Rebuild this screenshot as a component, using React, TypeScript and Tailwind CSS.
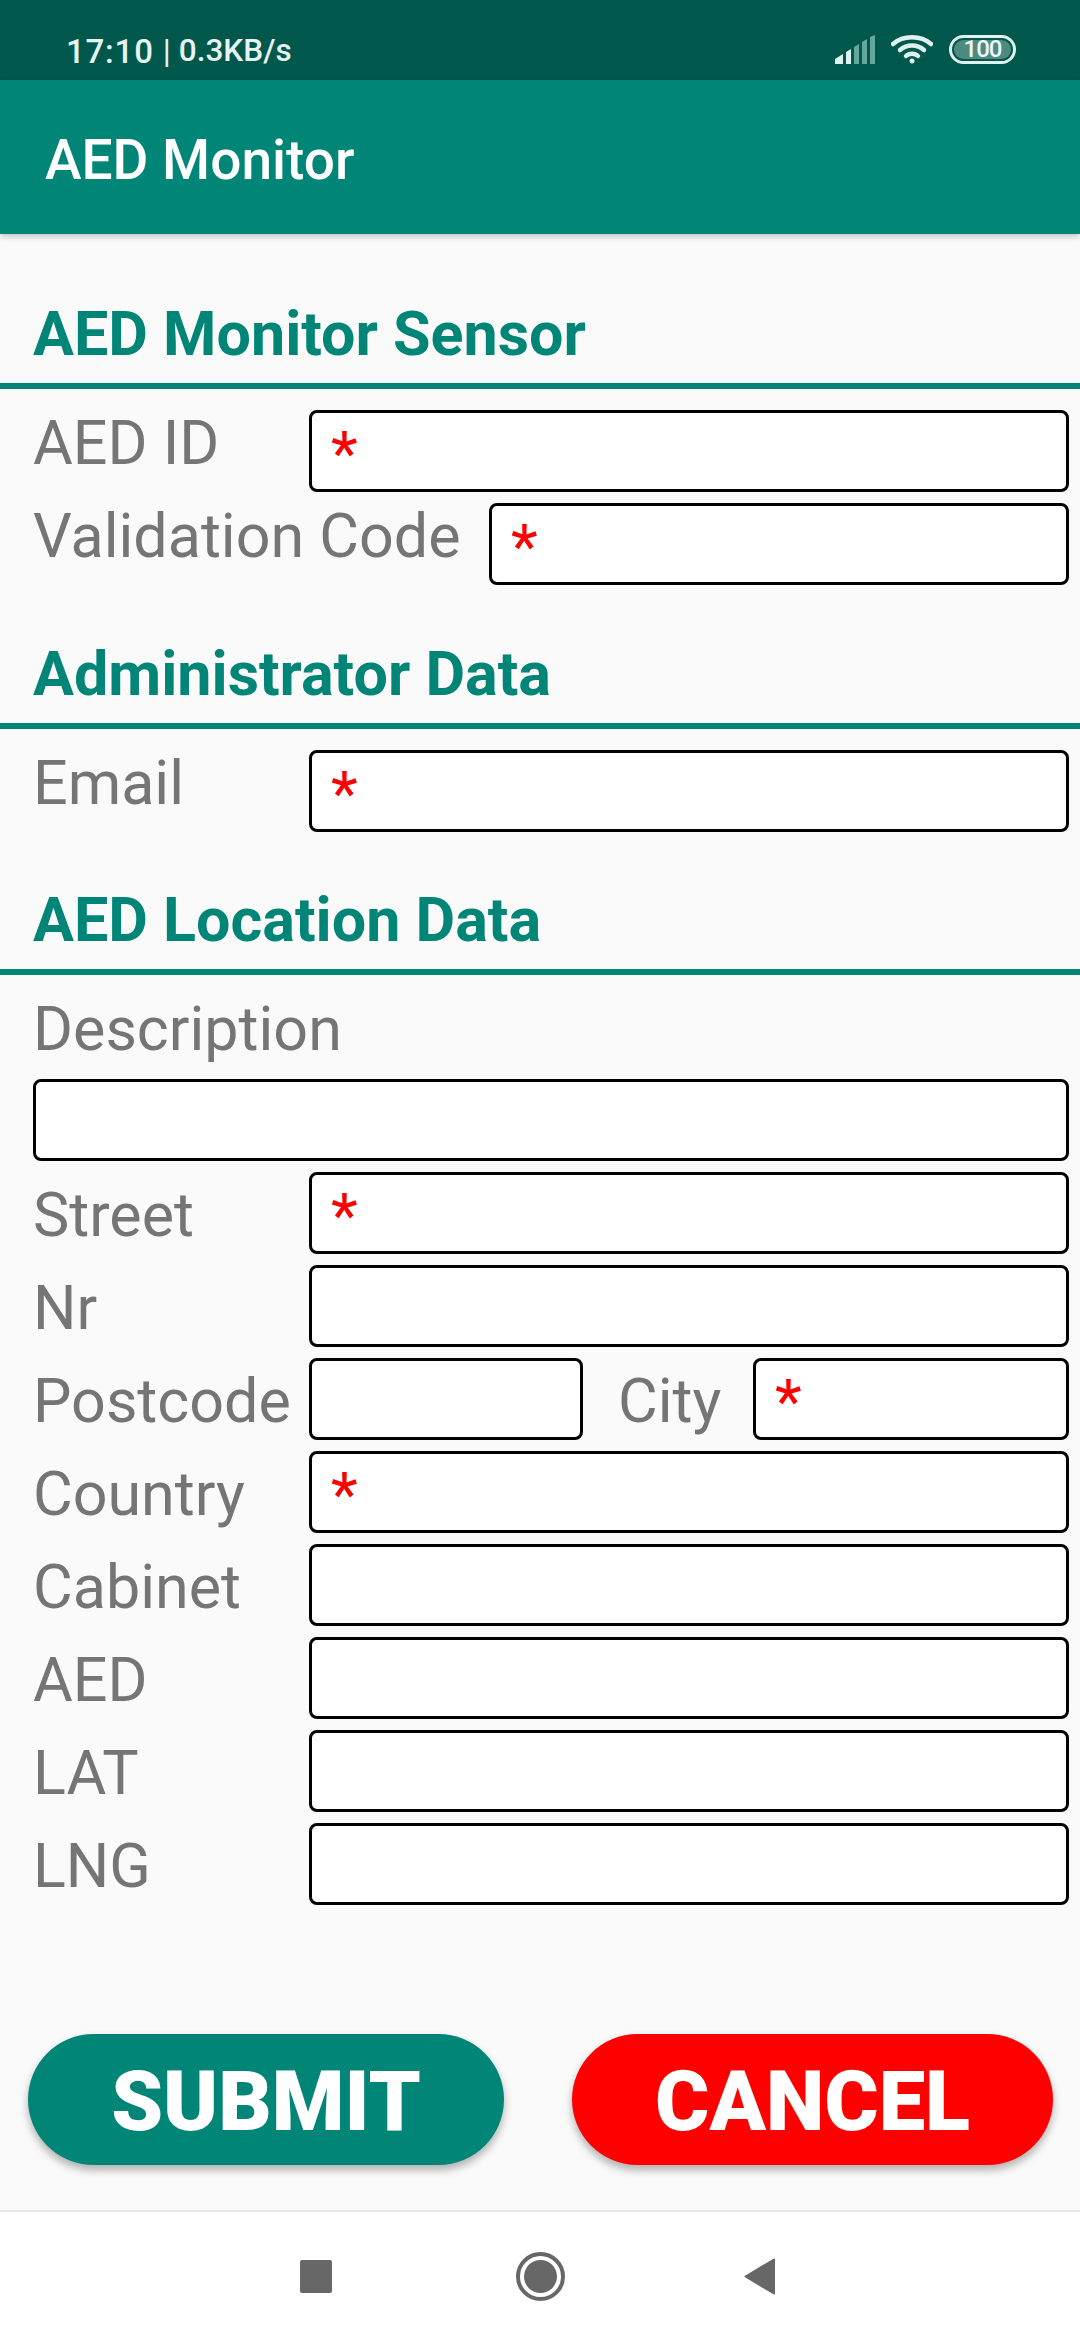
const labelText = "h-[82px] text-[61px] text-[#757575] whitespace-nowrap";
const topLabel = "leading-[67px]"; // first two sections sit higher against the field
const lowLabel = "leading-[87px]";

function Field({ required, className }: { required?: boolean; className?: string }) {
  return (
    <div
      className={`h-[82px] min-w-0 overflow-hidden rounded-[8px] border-[3px] border-black bg-white pl-[19px] text-[62px] leading-[82px] text-[#ff0000] ${className ?? ""}`}
    >
      {required ? "*" : ""}
    </div>
  );
}

function Row({ label, required, labelClass = lowLabel }: { label: string; required?: boolean; labelClass?: string }) {
  return (
    <div className="flex h-[82px] items-start">
      <span className={`w-[276px] ${labelText} ${labelClass}`}>{label}</span>
      <Field required={required} className="flex-1" />
    </div>
  );
}

function Section({ title, children }: { title: string; children: React.ReactNode }) {
  return (
    <section>
      <h2 className="px-[33px] text-[61px] leading-[70px] font-bold text-[#008577]">{title}</h2>
      <div className="mt-[14px] h-[6px] bg-[#008577]" />
      <div className="mt-[21px] flex flex-col gap-[11px] pl-[33px] pr-[11px]">{children}</div>
    </section>
  );
}

function StatusIcons() {
  return (
    <div className="flex items-center gap-[16px]">
      <svg width="40" height="29" viewBox="0 0 40 29">
        <path d="M0 29V24L8 19V29Z" fill="#e0f2ef" />
        <path d="M11 29V17L16 14V29Z" fill="#e0f2ef" />
        <path d="M19 29V12L24 9V29Z" fill="#66a79d" />
        <path d="M27 29V7L32 4V29Z" fill="#66a79d" />
        <path d="M35 29V2L40 0V29Z" fill="#66a79d" />
      </svg>
      <svg width="42" height="30" viewBox="0 0 42 30" fill="none" stroke="#e0f2ef" strokeWidth="4.5" strokeLinecap="round">
        <path d="M2 10C12 1 30 1 40 10" />
        <path d="M9 16C16 10 26 10 33 16" />
        <path d="M15 22C18 19 24 19 27 22" />
        <circle cx="21" cy="27" r="2.5" fill="#e0f2ef" stroke="none" />
      </svg>
      <div className="flex h-[29px] w-[67px] items-center justify-center rounded-full border-[3px] border-[#e0f2ef] p-[2px]">
        <div className="flex h-full w-full items-center justify-center rounded-full bg-[#4d8a80] text-[24px] leading-none font-medium tracking-[-1px] text-[#eef7f5]">
          100
        </div>
      </div>
    </div>
  );
}

export default function App() {
  return (
    <div className="flex h-[2340px] w-[1080px] flex-col overflow-hidden bg-[#fafafa] font-['Roboto',sans-serif]">
      <header className="flex h-[80px] items-center justify-between bg-[#00574b] pl-[66px] pr-[64px] pt-[18px]">
        <div className="mt-[4px] flex items-center text-[33px] leading-none font-medium text-[#e6f3f1]">
          <span className="tracking-[0.8px]">17:10</span>
          <span className="ml-[9px] font-normal">|</span>
          <span className="ml-[8px] text-[31.5px]">0.3KB/s</span>
        </div>
        <StatusIcons />
      </header>
      <div className="z-10 flex h-[154px] items-center bg-[#008577] px-[45px] pt-[6px] shadow-[0_3px_6px_rgba(0,0,0,0.2)]">
        <h1 className="text-[55px] font-medium text-white">AED Monitor</h1>
      </div>

      <main className="flex flex-1 flex-col pt-[65px]">
        <Section title="AED Monitor Sensor">
          <Row label="AED ID" required labelClass={topLabel} />
          <div className="flex h-[82px] items-start">
            <span className={`w-[456px] ${labelText} ${topLabel}`}>Validation Code</span>
            <Field required className="flex-1" />
          </div>
        </Section>

        <div className="mt-[54px]">
          <Section title="Administrator Data">
            <Row label="Email" required labelClass={topLabel} />
          </Section>
        </div>

        <div className="mt-[53px]">
          <Section title="AED Location Data">
            <span className={`-mt-[7px] -mb-[3px] ${labelText} leading-[81px]`}>Description</span>
            <Field />
            <Row label="Street" required />
            <Row label="Nr" />
            <div className="flex h-[82px] items-start">
              <span className={`w-[276px] ${labelText} ${lowLabel}`}>Postcode</span>
              <Field className="w-[274px]" />
              <span className={`ml-[35px] w-[135px] ${labelText} ${lowLabel}`}>City</span>
              <Field required className="flex-1" />
            </div>
            <Row label="Country" required />
            <Row label="Cabinet" />
            <Row label="AED" />
            <Row label="LAT" />
            <Row label="LNG" />
          </Section>
        </div>

        <div className="mt-auto flex items-start justify-between pb-[45px] pl-[28px] pr-[27px]">
          <button className="h-[131px] w-[476px] rounded-[66px] bg-[#008577] pt-[6px] text-[83px] font-black text-white shadow-[0_5px_8px_rgba(0,0,0,0.3)]">
            SUBMIT
          </button>
          <button className="h-[131px] w-[481px] rounded-[66px] bg-[#ff0000] pt-[6px] text-[83px] font-black text-white shadow-[0_5px_8px_rgba(0,0,0,0.3)]">
            CANCEL
          </button>
        </div>
      </main>

      <nav className="flex h-[130px] items-center border-t-2 border-[#e8e8e8] bg-white pl-[300px]">
        <div className="h-[33px] w-[32px] rounded-[2px] bg-[#676767]" />
        <div className="ml-[184px] flex h-[49px] w-[49px] items-center justify-center rounded-full border-[4px] border-[#676767]">
          <div className="h-[33px] w-[33px] rounded-full bg-[#676767]" />
        </div>
        <svg width="32" height="37" viewBox="0 0 32 37" className="ml-[179px]">
          <path d="M30 1.5V35.5L1.5 18.5Z" fill="#676767" stroke="#676767" strokeWidth="2" strokeLinejoin="round" />
        </svg>
      </nav>
    </div>
  );
}
